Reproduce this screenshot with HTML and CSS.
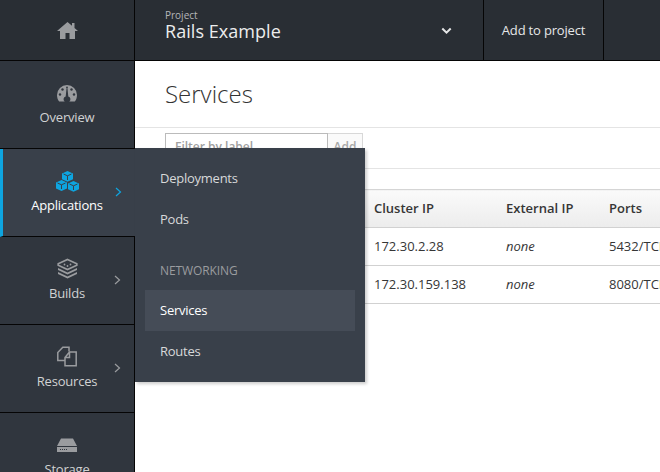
FILE: index.html
```html
<!DOCTYPE html>
<html lang="en">
<head>
<meta charset="utf-8">
<title>Services</title>
<link rel="stylesheet" href="styles.css">
</head>
<body>
<div class="app">
  <header class="topbar">
    <a class="home-cell"><svg class="home-icon" width="21" height="17" viewBox="0 0 21 17"><path d="M10.500 0 L0 9 H3 V17 H8.500 V11 H12.500 V17 H18 V9 H21 L17.500 6 V1 H15 V3.800 Z" fill="#9a9c9f"/></svg></a>
    <div class="project-cell">
      <div class="project-text">
        <div class="project-label">Project</div>
        <div class="project-name">Rails Example</div>
      </div>
      <svg class="caret" width="11" height="8" viewBox="0 0 11 8"><path d="M1.300 1.500 L5.500 5.700 L9.700 1.500" fill="none" stroke="#e4e5e6" stroke-width="2"/></svg>
    </div>
    <a class="add-cell">Add to project</a>
    <div class="rest-cell"></div>
  </header>
  <div class="body">
    <nav class="sidebar">
      <a class="nav-item">
        <svg width="20" height="17" viewBox="0 0 20 17"><path d="M10 0 A10 10 0 0 0 0 10 C0 12.500 .8 15 2.200 16.500 H7.700 A2.800 2.800 0 0 1 8.700 11.500 L9.500 3.500 H10.500 L11.300 11.500 A2.800 2.800 0 0 1 12.300 16.500 H17.800 C19.200 15 20 12.500 20 10 A10 10 0 0 0 10 0 Z" fill="#9a9c9f"/><circle cx="5.500" cy="4.500" r="1.200" fill="#30363e"/><circle cx="14.500" cy="4.500" r="1.200" fill="#30363e"/><circle cx="3" cy="9.500" r="1.200" fill="#30363e"/><circle cx="17" cy="9.500" r="1.200" fill="#30363e"/><circle cx="10" cy="2.500" r=".9" fill="#30363e"/></svg>
        <span class="nav-label">Overview</span>
      </a>
      <a class="nav-item active">
        <svg width="25" height="21" viewBox="0 0 25 21"><g fill="#0ea5e0"><path d="M12.500 0 L18 2.400 V8.300 L12.500 10.700 L7 8.300 V2.400 Z"/><path d="M6.500 9 L12 11.400 V17.600 L6.500 20 L1 17.600 V11.400 Z"/><path d="M18.500 10 L24 12.400 V18.300 L18.500 20.700 L13 18.300 V12.400 Z"/></g><g fill="none" stroke="#39404a" stroke-width="1"><path d="M8.500 3 L12.500 4.800 L16.500 3 M12.500 4.800 V9"/><path d="M2.500 12 L6.500 13.800 L10.500 12 M6.500 13.800 V18"/><path d="M14.500 13 L18.500 14.800 L22.500 13 M18.500 14.800 V19"/></g></svg>
        <span class="nav-label">Applications</span>
        <svg class="chev" width="7" height="10" viewBox="0 0 7 10"><path d="M1 1 L5.500 5 L1 9" fill="none" stroke="#0ea5e0" stroke-width="1.200"/></svg>
      </a>
      <a class="nav-item builds">
        <svg width="21" height="20" viewBox="0 0 21 20"><path d="M10.500 .9 L19.800 5.200 V6.800 L10.500 11.100 L1.200 6.800 V5.200 Z" fill="none" stroke="#9a9c9f" stroke-width="1.700"/><circle cx="7.500" cy="6" r=".9" fill="#9a9c9f"/><circle cx="10.500" cy="7.500" r=".9" fill="#9a9c9f"/><circle cx="13.500" cy="6" r=".9" fill="#9a9c9f"/><path d="M1 9.500 L10.500 14 L20 9.500 V11.500 L10.500 16 L1 11.500 Z" fill="#9a9c9f"/><path d="M1 13.500 L10.500 18 L20 13.500 V15.500 L10.500 20 L1 15.500 Z" fill="#9a9c9f"/></svg>
        <span class="nav-label">Builds</span>
        <svg class="chev" width="7" height="10" viewBox="0 0 7 10"><path d="M1 1 L5.500 5 L1 9" fill="none" stroke="#9a9c9f" stroke-width="1.200"/></svg>
      </a>
      <a class="nav-item resources">
        <svg width="20" height="20" viewBox="0 0 20 20"><g fill="none" stroke="#9a9c9f" stroke-width="1.500"><path d="M8 14 H.8 V6 L5.800 .8 H12 V5"/><path d="M8 11 L12.500 5.500 H19.200 V19.200 H8 Z M8 11 H12.500 V5.500"/></g></svg>
        <span class="nav-label">Resources</span>
        <svg class="chev" width="7" height="10" viewBox="0 0 7 10"><path d="M1 1 L5.500 5 L1 9" fill="none" stroke="#9a9c9f" stroke-width="1.200"/></svg>
      </a>
      <a class="nav-item">
        <svg width="20" height="14" viewBox="0 0 20 14"><path d="M4 0 H16 L20 7.500 H0 Z" fill="#9a9c9f"/><path d="M0 8.500 H20 V13.500 H0 Z" fill="#9a9c9f"/><path d="M3 11 H11" stroke="#30363e" stroke-width="1" stroke-dasharray="1 1"/></svg>
        <span class="nav-label">Storage</span>
      </a>
    </nav>
    <main class="content">
      <h1 class="page-title">Services</h1>
      <div class="filter-bar">
        <div class="filter-group">
          <input class="filter-input" placeholder="Filter by label">
          <button class="filter-add">Add</button>
        </div>
      </div>
      <table class="services">
        <colgroup><col class="col-name"><col class="col-ip"><col class="col-ext"><col class="col-ports"></colgroup>
        <thead>
          <tr><th></th><th>Cluster IP</th><th>External IP</th><th>Ports</th></tr>
        </thead>
        <tbody>
          <tr><td></td><td>172.30.2.28</td><td><em>none</em></td><td>5432/TCP</td></tr>
          <tr><td></td><td>172.30.159.138</td><td><em>none</em></td><td>8080/TCP</td></tr>
        </tbody>
      </table>
    </main>
  </div>
  <div class="flyout">
    <a class="fly-item">Deployments</a>
    <a class="fly-item">Pods</a>
    <div class="fly-head">NETWORKING</div>
    <a class="fly-item lower current">Services</a>
    <a class="fly-item lower">Routes</a>
  </div>
</div>
</body>
</html>
```

FILE: styles.css
```css
* { box-sizing: border-box; }
html, body { margin: 0; height: 100%; overflow: hidden; background: #fff; }
body { font-family: "Open Sans", sans-serif; font-size: 13px; color: #363636; }
.app { position: relative; width: 660px; height: 472px; overflow: hidden; }

.topbar { display: flex; height: 61px; background: #292e34; border-bottom: 1px solid #050505; color: #e6e7e8; }
.home-cell { width: 135px; flex: none; display: flex; align-items: center; justify-content: center; border-right: 1px solid #050505; }
.home-icon { margin-top: 1px; }
.project-cell { width: 349px; flex: none; display: flex; align-items: center; justify-content: space-between; padding: 0 31px 0 30px; border-right: 1px solid #050505; }
.project-text { margin-bottom: 8px; }
.project-label { font-size: 10px; line-height: 10px; color: #b5b7b9; }
.project-name { font-size: 18px; line-height: 22px; color: #eceded; letter-spacing: .05px; }
.caret { margin-top: 2px; }
.add-cell { width: 120px; flex: none; display: flex; align-items: center; justify-content: center; font-size: 13px; border-right: 1px solid #050505; letter-spacing: -.18px; }
.rest-cell { flex: 1; }

.body { display: flex; height: 411px; }
.sidebar { width: 135px; flex: none; background: #30363e; border-right: 1px solid #050505; }
.nav-item { position: relative; display: flex; flex-direction: column; align-items: center; height: 88px; padding-top: 22px; border-bottom: 1px solid #050505; color: #d1d2d3; }
.nav-item svg:first-child { height: 21px; margin-bottom: 4px; flex: none; }
.nav-item.builds svg:first-child { margin-top: -1px; margin-bottom: 5px; }
.nav-item.resources svg:first-child { margin-top: -1px; margin-bottom: 5px; }
.nav-label { font-size: 13px; line-height: 18px; letter-spacing: -.2px; }
.nav-item.active { width: 135px; background: #39404a; color: #fff; border-left: 3px solid #0ea5e0; padding-right: 4px; margin-right: -1px; }
.chev { position: absolute; right: 13px; top: 38px; }

.content { flex: 1; min-width: 0; }
.page-title { margin: 0; height: 67px; padding: 16px 0 0 30px; font-size: 24px; line-height: 33px; font-weight: 300; color: #333; border-bottom: 1px solid #e4e4e4; }
.filter-bar { height: 41px; padding: 5px 0 0 30px; border-bottom: 1px solid #e4e4e4; }
.filter-group { display: flex; height: 26px; }
.filter-input { width: 163px; height: 26px; border: 1px solid #bbb; padding: 0 9px; font: 12px "Open Sans", sans-serif; }
.filter-input::placeholder { color: #a0a0a0; font-weight: 600; opacity: 1; }
.filter-add { width: 35px; height: 26px; border: 1px solid #d8d8d8; border-left: 0; background: #fafafa; font: 600 12px "Open Sans", sans-serif; color: #a8a8a8; padding: 0; }

.services { margin: 20px 0 0 30px; border-collapse: collapse; table-layout: fixed; width: 600px; border-top: 1px solid #d5d5d5; }
.col-name { width: 199px; }
.col-ip { width: 132px; }
.col-ext { width: 103px; }
.services th { height: 38px; padding: 0 0 2px 10px; text-align: left; font-size: 13px; font-weight: 600; color: #363636; background: linear-gradient(#fafafa, #ececec); border-bottom: 1px solid #d1d1d1; white-space: nowrap; overflow: hidden; }
.services td { height: 38px; padding: 0 0 2px 10px; font-size: 13px; color: #363636; border-bottom: 1px solid #d1d1d1; white-space: nowrap; overflow: hidden; }

.flyout { position: absolute; left: 135px; top: 148px; width: 230px; height: 234px; padding: 9px 10px 0; background: #39404a; box-shadow: 2px 2px 3px rgba(0, 0, 0, .2); display: flex; flex-direction: column; }
.fly-item { height: 41px; flex: none; display: flex; align-items: center; padding-left: 15px; font-size: 13px; color: #d8d9da; letter-spacing: -.25px; }
.fly-item.lower { padding-bottom: 2px; }
.fly-item.current { background: #454c57; color: #fff; }
.fly-head { height: 30px; margin: 16px 0 5px; flex: none; display: flex; align-items: center; padding-left: 15px; font-size: 12px; color: #9a9c9f; letter-spacing: -.1px; }
```
